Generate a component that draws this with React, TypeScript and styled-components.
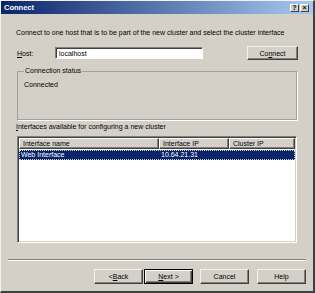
import * as React from 'react'
import styled, { createGlobalStyle } from 'styled-components'

const GlobalStyle = createGlobalStyle`
  html, body {
    margin: 0;
    padding: 0;
    background: #d4d0c8;
  }
  body {
    font-family: "Liberation Sans", Arial, sans-serif;
    font-size: 7px;
    color: #000;
  }
`

const Window = styled.div`
  width: 315px;
  height: 293px;
  box-sizing: border-box;
  background: #d4d0c8;
  border-style: solid;
  border-width: 1px 2px 2px 1px;
  border-color: #f4f2ee #404040 #404040 #f4f2ee;
  display: flex;
  flex-direction: column;
  overflow: hidden;
`

const TitleBar = styled.div`
  height: 13px;
  flex: none;
  display: flex;
  align-items: center;
  padding: 0 4px 0 3px;
  background: linear-gradient(to right, #0a246a, #a6caf0);
  color: #fff;
  font-weight: bold;
  font-size: 7.5px;
`

const Title = styled.span`
  flex: 1;
`

const TitleButton = styled.span`
  width: 9px;
  height: 8px;
  box-sizing: border-box;
  margin-left: 1px;
  background: #d4d0c8;
  border-style: solid;
  border-width: 1px;
  border-color: #fff #404040 #404040 #fff;
  color: #000;
  font-size: 7px;
  font-weight: bold;
  line-height: 6px;
  text-align: center;
`

const Body = styled.div`
  flex: 1;
  display: flex;
  flex-direction: column;
  padding: 0 16px 0 15px;
`

const Text = styled.div<{ $top: number }>`
  margin-top: ${p => p.$top}px;
  height: 8px;
  line-height: 8px;
  white-space: nowrap;
`

const HostRow = styled.div`
  margin-top: 9px;
  height: 14px;
  display: flex;
  align-items: center;
`

const HostLabel = styled.span`
  width: 38px;
  padding-left: 1px;
`

const Input = styled.div`
  width: 148px;
  height: 12px;
  box-sizing: border-box;
  background: #fff;
  border-style: solid;
  border-width: 1px;
  border-color: #808080 #fff #fff #808080;
  box-shadow: inset 1px 1px 0 #404040;
  padding: 1px 0 0 3px;
  line-height: 9px;
`

const Button = styled.div<{ $default?: boolean; $gap?: number }>`
  width: 49px;
  height: 15px;
  box-sizing: border-box;
  margin-left: ${p => p.$gap ?? 0}px;
  display: flex;
  align-items: center;
  justify-content: center;
  background: #d4d0c8;
  border: 1px solid;
  border-color: ${p => (p.$default ? '#000' : '#f4f2ee #404040 #404040 #f4f2ee')};
  box-shadow: ${p =>
    p.$default
      ? 'inset 1px 1px 0 #fff, inset -1px -1px 0 #404040, inset -2px -2px 0 #808080'
      : 'inset -1px -1px 0 #808080'};
`

const ConnectButton = styled(Button)`
  height: 14px;
  margin-left: auto;
  margin-right: -1px;
  width: 51px;
`

const Group = styled.fieldset`
  margin: 7px 0 0 1px;
  padding: 0 0 0 6px;
  height: 53px;
  box-sizing: border-box;
  border: 1px solid #a0a0a0;
  box-shadow: 1px 1px 0 #fff;
  min-width: 0;
`

const Legend = styled.legend`
  padding: 0 1px;
  margin-left: 0;
  line-height: 8px;
`

const StatusText = styled.div`
  margin-top: 6px;
  line-height: 8px;
`

const List = styled.div`
  margin: 5px 0 0 1px;
  height: 107px;
  box-sizing: border-box;
  background: #fff;
  border-style: solid;
  border-width: 1px;
  border-color: #808080 #fff #fff #808080;
  box-shadow: inset 1px 1px 0 #404040, inset -1px -1px 0 #d4d0c8;
  padding: 1px;
  display: flex;
  flex-direction: column;
`

const Cols = '140px 70px 1fr'

const HeaderRow = styled.div`
  display: grid;
  grid-template-columns: ${Cols};
  height: 11px;
`

const HeaderCell = styled.div`
  box-sizing: border-box;
  background: #d4d0c8;
  border-style: solid;
  border-width: 1px;
  border-color: #fff #404040 #404040 #fff;
  box-shadow: inset -1px -1px 0 #808080;
  padding-left: 3px;
  line-height: 9px;
  white-space: nowrap;
  overflow: hidden;
`

const Row = styled.div<{ $selected?: boolean }>`
  display: grid;
  grid-template-columns: ${Cols};
  height: 10px;
  margin-top: 1px;
  line-height: 10px;
  background: ${p => (p.$selected ? '#0a246a' : 'transparent')};
  color: ${p => (p.$selected ? '#fff' : '#000')};
  outline: ${p => (p.$selected ? '1px dotted #d4d0c8' : 'none')};
  outline-offset: -1px;
`

const Cell = styled.div`
  padding-left: 2px;
  white-space: nowrap;
  overflow: hidden;
`

const Footer = styled.div`
  padding: 0 7px 7px 7px;
  display: flex;
  flex-direction: column;
`

const Separator = styled.div`
  margin-top: 16px;
  height: 2px;
  box-sizing: border-box;
  border-top: 1px solid #808080;
  border-bottom: 1px solid #fff;
`

const ButtonRow = styled.div`
  margin-top: 8px;
  display: flex;
  justify-content: flex-end;
`

const App = () => {
  return (
    <>
      <GlobalStyle />
      <Window>
        <TitleBar>
          <Title>Connect</Title>
          <TitleButton>?</TitleButton>
          <TitleButton>×</TitleButton>
        </TitleBar>
        <Body>
          <Text $top={15}>
            Connect to one host that is to be part of the new cluster and select the cluster interface
          </Text>
          <HostRow>
            <HostLabel>
              <u>H</u>ost:
            </HostLabel>
            <Input>localhost</Input>
            <ConnectButton>
              Co<u>n</u>nect
            </ConnectButton>
          </HostRow>
          <Group>
            <Legend>Connection status</Legend>
            <StatusText>Connected</StatusText>
          </Group>
          <Text $top={3}>
            <u>I</u>nterfaces available for configuring a new cluster
          </Text>
          <List>
            <HeaderRow>
              <HeaderCell>Interface name</HeaderCell>
              <HeaderCell>Interface IP</HeaderCell>
              <HeaderCell>Cluster IP</HeaderCell>
            </HeaderRow>
            <Row $selected>
              <Cell>Web Interface</Cell>
              <Cell>10.64.21.31</Cell>
              <Cell></Cell>
            </Row>
          </List>
        </Body>
        <Footer>
          <Separator />
          <ButtonRow>
            <Button>
              &lt; <u>B</u>ack
            </Button>
            <Button $default $gap={1}>
              <u>N</u>ext &gt;
            </Button>
            <Button $gap={7}>Cancel</Button>
            <Button $gap={8}>Help</Button>
          </ButtonRow>
        </Footer>
      </Window>
    </>
  )
}

export default App
